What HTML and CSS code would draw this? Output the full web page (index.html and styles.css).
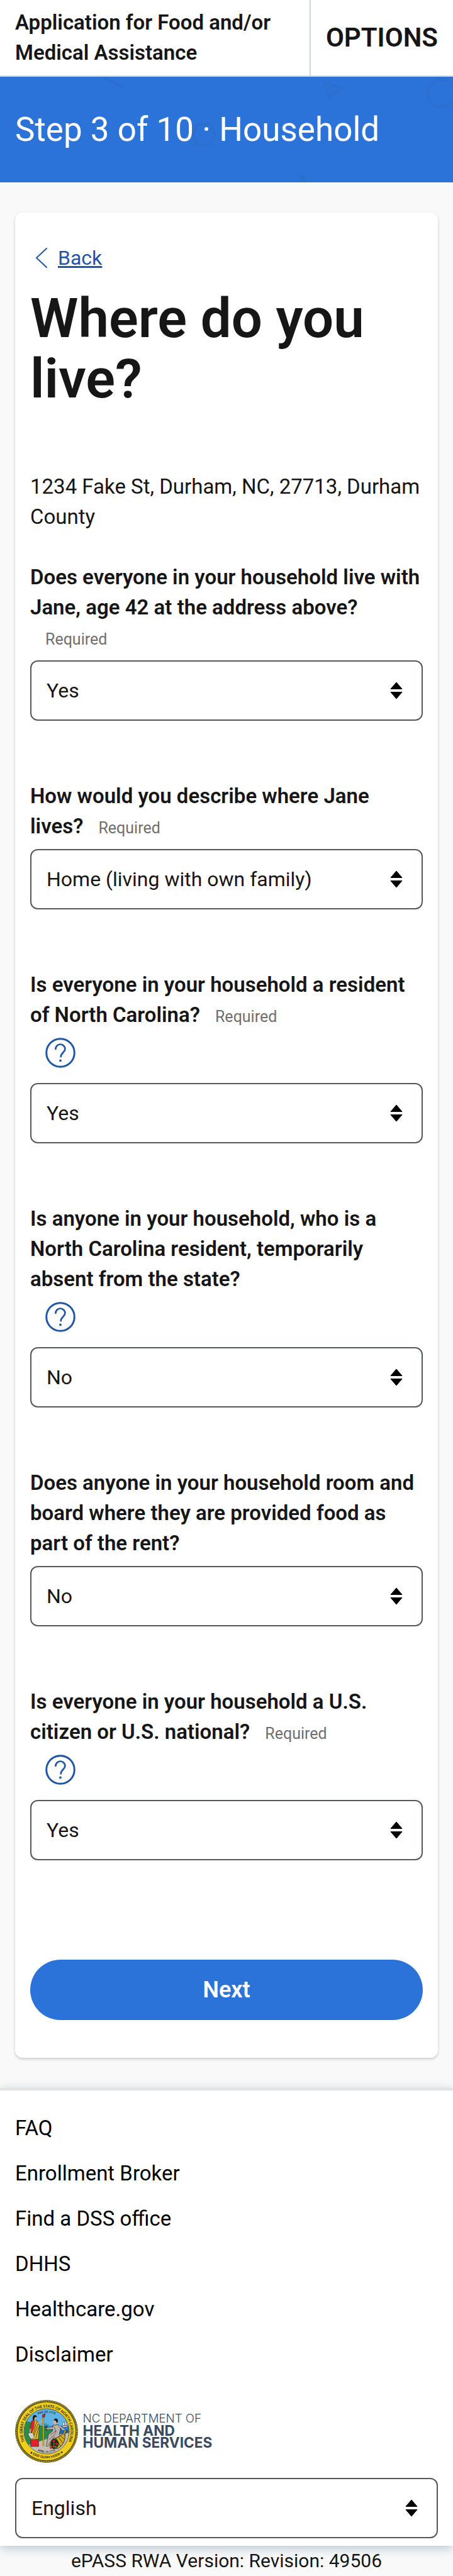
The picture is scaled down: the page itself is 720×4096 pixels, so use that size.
FILE: index.html
```html
<!DOCTYPE html>
<html lang="en">
<head>
<meta charset="utf-8">
<meta name="viewport" content="width=device-width, initial-scale=1">
<title>Application for Food and/or Medical Assistance</title>
<link rel="stylesheet" href="styles.css">
</head>
<body>
<svg class="sprite" aria-hidden="true">
  <symbol id="sort" viewBox="0 0 20 28"><path d="M10 1 19 11.5H1ZM10 27 19 16.5H1Z" fill="#000" stroke="#000" stroke-width="1" stroke-linejoin="round"/></symbol>
  <symbol id="help" viewBox="0 0 48 48"><g fill="none" stroke="#1f57a8" stroke-linecap="round"><circle cx="24" cy="24" r="22.3" stroke-width="3"/><path d="M16.4 18a7.5 7.5 0 0 1 15 0c0 5.5-6.7 6-6.7 12.2" stroke-width="2.7"/></g><circle cx="24" cy="36.4" r="1.9" fill="#1f57a8"/></symbol>
</svg>

<header class="topbar">
  <p class="app-name">Application for Food and/or Medical Assistance</p>
  <button class="options" type="button">OPTIONS</button>
</header>

<div class="banner">
  <svg class="banner-art" width="720" height="168" viewBox="0 0 720 168" aria-hidden="true">
    <g fill="none" stroke="#2d6fcf" stroke-width="4">
      <path d="M165 1 194 16"/>
      <path d="M516 9 542 18 523 33Z"/>
      <circle cx="702" cy="26" r="22"/>
      <path d="M313 76h22l6 16-6 16h-22l-6-16Z"/>
    </g>
    <circle cx="481" cy="161" r="5" fill="#2d6fcf"/>
  </svg>
  <p class="banner-title">Step 3 of 10 · Household</p>
</div>

<main class="card">
  <a class="back" href="#"><svg class="chevron" width="20" height="34" viewBox="0 0 20 34" aria-hidden="true"><path d="M18 2 2 17 18 32" fill="none" stroke="#1f57a8" stroke-width="2" stroke-linecap="round" stroke-linejoin="round"/></svg><span class="back-text">Back</span></a>
  <h1 class="title">Where do you live?</h1>
  <p class="address">1234 Fake St, Durham, NC, 27713, Durham County</p>

  <form class="form">
    <div class="field">
      <label class="question" for="q1">Does everyone in your household live with Jane, age 42 at the address above? <span class="required">Required</span></label>
      <div class="select-box"><select class="select" id="q1"><option>Yes</option><option>No</option></select><svg class="sort"><use href="#sort"/></svg></div>
    </div>
    <div class="field">
      <label class="question" for="q2">How would you describe where Jane lives?<span class="required">Required</span></label>
      <div class="select-box"><select class="select" id="q2"><option>Home (living with own family)</option></select><svg class="sort"><use href="#sort"/></svg></div>
    </div>
    <div class="field">
      <label class="question" for="q3">Is everyone in your household a resident of North Carolina?<span class="required">Required</span></label>
      <button class="help" type="button" aria-label="Help"><svg class="help-icon"><use href="#help"/></svg></button>
      <div class="select-box"><select class="select" id="q3"><option>Yes</option><option>No</option></select><svg class="sort"><use href="#sort"/></svg></div>
    </div>
    <div class="field">
      <label class="question" for="q4">Is anyone in your household, who is a North Carolina resident, temporarily absent from the state?</label>
      <button class="help" type="button" aria-label="Help"><svg class="help-icon"><use href="#help"/></svg></button>
      <div class="select-box"><select class="select" id="q4"><option>No</option><option>Yes</option></select><svg class="sort"><use href="#sort"/></svg></div>
    </div>
    <div class="field">
      <label class="question" for="q5">Does anyone in your household room and board where they are provided food as part of the rent?</label>
      <div class="select-box"><select class="select" id="q5"><option>No</option><option>Yes</option></select><svg class="sort"><use href="#sort"/></svg></div>
    </div>
    <div class="field">
      <label class="question" for="q6">Is everyone in your household a U.S. citizen or U.S. national?<span class="required">Required</span></label>
      <button class="help" type="button" aria-label="Help"><svg class="help-icon"><use href="#help"/></svg></button>
      <div class="select-box"><select class="select" id="q6"><option>Yes</option><option>No</option></select><svg class="sort"><use href="#sort"/></svg></div>
    </div>
    <button class="next" type="submit">Next</button>
  </form>
</main>

<footer class="footer">
  <nav class="links">
    <a class="link" href="#">FAQ</a>
    <a class="link" href="#">Enrollment Broker</a>
    <a class="link" href="#">Find a DSS office</a>
    <a class="link" href="#">DHHS</a>
    <a class="link" href="#">Healthcare.gov</a>
    <a class="link" href="#">Disclaimer</a>
  </nav>
  <svg class="logo" width="320" height="100" viewBox="48 50 1440 450" role="img" aria-label="NC Department of Health and Human Services">
    <defs>
      <path id="ring-top" d="M137 381A172 172 0 1 1 409 381"/>
      <path id="ring-bottom" d="M150 424A194 194 0 0 0 396 424"/>
      <path id="date-top" d="M205 160A134 134 0 0 1 341 160"/>
      <path id="date-bottom" d="M200 410A154 154 0 0 0 346 410"/>
      <clipPath id="disc"><circle cx="273" cy="275" r="160"/></clipPath>
    </defs>
    <circle cx="273" cy="275" r="224" fill="#2d2a1e"/>
    <circle cx="273" cy="275" r="217" fill="none" stroke="#d9bd1c" stroke-width="11" stroke-dasharray="4 3"/>
    <circle cx="273" cy="275" r="209" fill="#f0cf17" stroke="#2d2a1e" stroke-width="2"/>
    <circle cx="273" cy="275" r="162" fill="#5fb3e6" stroke="#222" stroke-width="3"/>
    <g clip-path="url(#disc)">
      <path d="M260 236H440V310H260Z" fill="#1f6bb8"/>
      <path d="M280 243q12-6 24 0t24 0M380 252q12-6 24 0t24 0" fill="none" stroke="#5fb3e6" stroke-width="4"/>
      <path d="M105 215q40-20 70 8 70 5 150 52l-60 70-160 30Z" fill="#2c8a49" stroke="#1c4d2c" stroke-width="2"/>
      <path d="M105 385 260 335 345 300 440 285V440H105Z" fill="#c6bdb4"/>
      <path d="M383 236h42l-5 8h-32ZM390 212h10v20h-12ZM403 208h9v24h-10ZM415 212h8v20h-9Z" fill="#fff" stroke="#222" stroke-width="2"/>
      <path d="M160 330h54l3 53h-58Z" fill="#e3202b" stroke="#222" stroke-width="3"/>
      <path d="M172 198l30-2 18 32v30l-6 74-56 2 8-60-10-35Z" fill="#e8bf1e" stroke="#222" stroke-width="3"/>
      <path d="M165 200l22-3-4 50-15 40-13-20Z" fill="#e3202b" stroke="#222" stroke-width="2"/>
      <path d="M202 205l-25 95M212 220l-35 105M216 245l-20 80" stroke="#3a3012" stroke-width="4"/>
      <ellipse cx="188" cy="180" rx="12" ry="17" fill="#dfa878"/>
      <path d="M176 195q-8-36 14-37 15 3 13 15l-15 2-3 20Z" fill="#191919"/>
      <path d="M158 260l-3 37M215 218l30-20" stroke="#dfa878" stroke-width="8" stroke-linecap="round"/>
      <path d="M140 290l32-3 13 34-28 4Z" fill="#fff" stroke="#222" stroke-width="2"/>
      <path d="M152 299h18M154 307h20M158 314h18" stroke="#333" stroke-width="2"/>
      <path d="M246 175h8v204h-8Z" fill="#edc81b" stroke="#4a3b10" stroke-width="2"/>
      <path d="M243 173l2-17 18-8-5 26Z" fill="#d9202b" stroke="#222" stroke-width="3"/>
      <path d="M258 220l15 50M270 218l3 52M284 225l-11 45" stroke="#222" stroke-width="3"/>
      <path d="M320 232l36-5 17 30-8 35 4 35-55 35-33 20h-10l15-85 30-25Z" fill="#bcb2ab" stroke="#222" stroke-width="3"/>
      <path d="M320 252l-45 3M367 240l40 32" stroke="#dfb08a" stroke-width="9" stroke-linecap="round"/>
      <ellipse cx="335" cy="208" rx="13" ry="19" fill="#dfb08a"/>
      <path d="M325 197q4-17 19-13 16 6 8 27l-9 2-3-14Z" fill="#191919"/>
      <path d="M300 300l45-30M290 335l50-45M285 370l45-60M330 245l10 40" stroke="#40393a" stroke-width="3"/>
      <path d="M400 270l22 5-18 10q10 80-50 113l-55-5q-5-65 45-72 45-15 56-51Z" fill="#d6ae18" stroke="#222" stroke-width="4"/>
      <path d="M390 290l14 15M375 308l26 25M360 320l30 40M340 325l35 58" stroke="#2e2710" stroke-width="4"/>
      <path d="M312 335q30-18 46 15 10 42-36 53-32-25-10-68Z" fill="#252a18"/>
      <g fill="#dd2631"><circle cx="325" cy="345" r="8"/><circle cx="345" cy="365" r="8"/><circle cx="324" cy="382" r="8"/><circle cx="304" cy="394" r="7"/></g>
      <g fill="#2c8a49"><circle cx="338" cy="386" r="8"/><circle cx="326" cy="364" r="6"/></g>
    </g>
    <g class="seal-text">
      <text font-size="27"><textPath href="#ring-top" startOffset="50%" text-anchor="middle">THE GREAT SEAL OF THE STATE OF NORTH CAROLINA</textPath></text>
      <text font-size="23"><textPath href="#ring-bottom" startOffset="50%" text-anchor="middle">★ ESSE QUAM VIDERI ★</textPath></text>
      <text font-size="20"><textPath href="#date-top" startOffset="50%" text-anchor="middle">MAY 20, 1775</textPath></text>
      <text font-size="19"><textPath href="#date-bottom" startOffset="50%" text-anchor="middle">APRIL 12, 1776</textPath></text>
    </g>
    <g class="logo-text">
      <text class="logo-light" x="532" y="211">NC DEPARTMENT OF</text>
      <text class="logo-bold" x="532" y="308">HEALTH AND</text>
      <text class="logo-bold" x="532" y="392">HUMAN SERVICES</text>
    </g>
  </svg>
  <div class="select-box"><select class="select" aria-label="Language"><option>English</option><option>Español</option></select><svg class="sort"><use href="#sort"/></svg></div>
</footer>
<p class="version">ePASS RWA Version: Revision: 49506</p>
</body>
</html>
```

FILE: styles.css
```css
* { box-sizing: border-box; }

body {
  margin: 0;
  background: #f9f9f9;
  color: #161616;
  font: 33px/48px Roboto, "Liberation Sans", sans-serif;
}

p, h1 { margin: 0; }

button, select { font: inherit; color: inherit; }

.sprite { display: none; }

.topbar {
  display: flex;
  background: #fff;
  border-bottom: 2px solid #d0d9d8;
}

.app-name {
  flex: 1;
  padding: 12px 24px;
  font-weight: 600;
}

.options {
  padding: 0 24px;
  background: none;
  border: 0;
  border-left: 2px solid #d0d9d8;
  font-size: 42px;
  font-weight: 600;
}

.banner {
  display: grid;
  align-items: center;
  overflow: hidden;
  background: #2c73d9;
  color: #fff;
}

.banner-art, .banner-title { grid-area: 1 / 1; }

.banner-title {
  padding: 48px 24px;
  font-size: 53px;
  line-height: 72px;
}

.card {
  margin: 48px 24px;
  padding: 48px 24px 60px;
  background: #fff;
  border-radius: 12px;
  box-shadow: 0 2px 4px rgba(0, 0, 0, 0.2);
}

.back {
  display: flex;
  width: max-content;
  align-items: center;
  gap: 16px;
  padding-left: 8px;
  color: #1f57a8;
  font-size: 32px;
  text-decoration: none;
}

.back-text { text-decoration: underline; }

.title {
  margin: 24px 0 100px;
  font-size: 87px;
  font-weight: 600;
  line-height: 96px;
}

.form {
  display: grid;
  gap: 96px;
  margin-top: 48px;
}

.question {
  display: block;
  margin-bottom: 12px;
  font-weight: 600;
}

.required {
  display: inline-block;
  margin-left: 24px;
  color: #6f6f6f;
  font-size: 25px;
  font-weight: 400;
  line-height: 32px;
}

.help {
  display: block;
  margin: 0 24px 24px;
  padding: 0;
  background: none;
  border: 0;
}

.help-icon {
  display: block;
  width: 48px;
  height: 48px;
}

.select-box {
  display: grid;
  align-items: center;
}

.select, .sort { grid-area: 1 / 1; }

.select {
  width: 100%;
  height: 96px;
  padding: 0 72px 0 24px;
  appearance: none;
  background: #fff;
  border: 2px solid #535a58;
  border-radius: 12px;
  font-size: 32px;
}

.sort {
  width: 20px;
  height: 28px;
  margin-right: 32px;
  justify-self: end;
  pointer-events: none;
}

.next {
  height: 96px;
  margin-top: 62px;
  background: #2c73d9;
  border: 0;
  border-radius: 48px;
  color: #fff;
  font-size: 36px;
  font-weight: 600;
}

.footer {
  padding: 24px 24px 12px;
  background: #fff;
  border-top: 4px solid #e4e4e4;
  box-shadow: 0 4px 16px #b8c5cf;
}

.links { display: grid; }

.link {
  padding: 12px 0;
  color: #000;
  text-decoration: none;
}

.logo {
  display: block;
  margin: 36px 0 24px;
}

.seal-text {
  fill: #222;
  font-family: Lato, sans-serif;
  font-weight: 700;
}

.logo-text {
  fill: #384a60;
  font-family: Inter, sans-serif;
}

.logo-light {
  font-size: 84px;
  font-weight: 300;
}

.logo-bold {
  font-size: 102px;
  font-weight: 700;
}

.version {
  font-size: 30px;
  text-align: center;
}
```
